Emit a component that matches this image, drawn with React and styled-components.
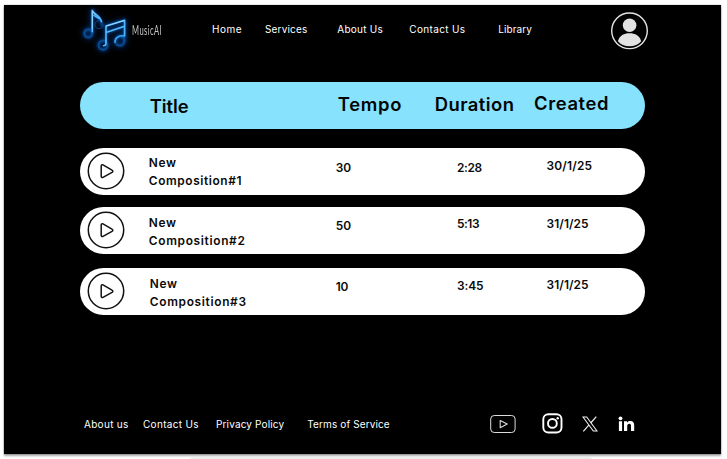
import React from "react";
import styled, { createGlobalStyle } from "styled-components";

const GlobalStyle = createGlobalStyle`
  * { box-sizing: border-box; }
  html, body { margin: 0; background: #fff; overflow: hidden; }
  body { font-family: "Inter", "Liberation Sans", sans-serif; }
`;

const Frame = styled.div`
  width: 727px;
  height: 459px;
  padding: 5px 6px 0 4px;
  display: flex;
  flex-direction: column;
  align-items: stretch;
`;

const Page = styled.div`
  height: 449px;
  flex: none;
  background: #000;
  display: flex;
  flex-direction: column;
  box-shadow: 0 1.5px 2px rgba(0, 0, 0, 0.35), 0 0 1px #777;
`;

const BottomTab = styled.div`
  width: 406px;
  height: 6px;
  margin: 3.2px 0 0 184px;
  flex: none;
  border-radius: 6px 6px 0 0;
  background: #ececec;
`;

const Header = styled.header`
  height: 77.4px;
  flex: none;
  display: flex;
  align-items: flex-start;
  padding-left: 76px;
`;

const Brand = styled.div`
  width: 132px;
  display: flex;
  align-items: flex-start;
`;

const BrandName = styled.span`
  width: 30px;
  margin: 18.4px 0 0 1.5px;
  font: 400 12.4px/16px "Lato", sans-serif;
  color: #c6c6c6;
  white-space: nowrap;
  letter-spacing: 0.7px;
  transform: scaleX(0.61);
  transform-origin: left center;
`;

const Nav = styled.nav`
  width: 399px;
  display: flex;
  padding-top: 17px;
`;

const NavLink = styled.a`
  flex: none;
  width: ${(p) => p.$width}px;
  font-size: 10px;
  line-height: 14px;
  color: #fff;
  white-space: nowrap;
  letter-spacing: ${(p) => p.$track}px;
`;

const Avatar = styled.svg`
  width: 38px;
  height: 38px;
  margin-top: 7px;
  flex: none;
`;

const Table = styled.main`
  width: 565px;
  margin-left: 75.8px;
  flex: none;
`;

const Bar = styled.div`
  height: 46.9px;
  margin-bottom: ${(p) => p.$gap}px;
  border-radius: 23.5px;
  background: ${(p) => (p.$head ? "#87e2fd" : "#fff")};
  display: grid;
  align-items: start;
  grid-template-columns: ${(p) =>
    p.$head ? "70px 188px 97px 99.3px 1fr" : "69px 187px 121.2px 89.5px 1fr"};
`;

const HeadCell = styled.span`
  margin-top: ${(p) => p.$top}px;
  font-size: 18.4px;
  font-weight: 600;
  line-height: 24px;
  letter-spacing: ${(p) => p.$track}px;
  color: #050505;
  white-space: nowrap;
`;

const Cell = styled.span`
  margin-top: ${(p) => p.$top}px;
  padding-left: ${(p) => p.$shift || 0}px;
  font-size: 11.9px;
  font-weight: 600;
  line-height: 18px;
  letter-spacing: ${(p) => p.$track || 0}px;
  color: #0a0a0a;
  white-space: nowrap;
`;

const PlayButton = styled.button`
  width: 38px;
  height: 38px;
  margin: 4px 0 0 7.2px;
  padding: 0;
  border: 0;
  background: none;
  svg { display: block; }
`;

const Footer = styled.footer`
  margin-top: auto;
  height: 48px;
  flex: none;
  display: flex;
  align-items: flex-start;
  padding-left: 80px;
`;

const FooterLinks = styled.nav`
  width: 405.5px;
  padding-top: 11.4px;
  display: flex;
`;

const Socials = styled.div`
  display: flex;
  align-items: center;
  height: 22px;
  margin-top: 6.7px;
`;

const SocialIcon = styled.svg`
  flex: none;
  margin-right: ${(p) => p.$gap || 0}px;
`;

const LogoArt = styled.svg`
  flex: none;
  margin-left: -6px;
`;

function Logo() {
  const notes = (
    <>
      <circle cx="18.3" cy="28.7" r="4" />
      <path d="M22.3 29V5.5L23 8c2 3.5 8.5 5.5 9 13" />
      <circle cx="33" cy="40.5" r="4.5" />
      <path d="M36 36V21.2l18.6-5.7V34.8M36 27.8l18.6-6.2" />
      <path d="M45 37.5c0-4.5 4-7 9.3-6.3" />
      <circle cx="49.8" cy="36.3" r="4.6" />
    </>
  );
  return (
    <LogoArt width="56" height="52" viewBox="0 0 56 52" overflow="visible" fill="none" strokeLinecap="round" strokeLinejoin="round">
      <defs>
        <filter id="wide" x="-40%" y="-40%" width="180%" height="180%">
          <feGaussianBlur stdDeviation="3" />
        </filter>
        <filter id="near" x="-30%" y="-30%" width="160%" height="160%">
          <feGaussianBlur stdDeviation="0.9" />
        </filter>
      </defs>
      <g transform="translate(-4 -0.3)">
        <g stroke="#0648a8" strokeWidth="3.5" opacity="0.65" filter="url(#wide)">{notes}</g>
        <g stroke="#0870d8" strokeWidth="2.2" opacity="0.65" filter="url(#near)">{notes}</g>
        <g stroke="#0f509c" strokeWidth="1.3">
          <circle cx="18.3" cy="28.7" r="4" />
          <circle cx="29" cy="20" r="4" opacity="0.6" />
          <circle cx="33" cy="40.5" r="4.5" />
          <circle cx="49.8" cy="36.3" r="4.6" />
        </g>
        <g stroke="#54b8ff" strokeWidth="1.6">
          <path d="M22.3 27V5.5c.8 3.500 8.200 5 9.200 11.500M24 10.500c2 2 4.500 2.500 6.500 4" />
          <path d="M36 36.5V21.2l18.600-5.700V31M36 27.800l18.600-6.200" />
          <path d="M45 37.500c0-4.500 4-7 9.300-6.300" stroke="#35a9f7" />
          <path d="M36 36.500v2c0 1.500-1 2.500-2.500 2.500" />
        </g>
        <path d="M22.300 24V6.500l3.500 4M36.500 21.300L54 16" stroke="#a8deff" strokeWidth="0.800" />
      </g>
    </LogoArt>
  );
}

function PlayIcon() {
  return (
    <svg width="38" height="38" viewBox="0 0 38 38" fill="none" stroke="#111" strokeLinejoin="round">
      <circle cx="19" cy="19" r="17.7" strokeWidth="1.5" />
      <path d="M14.2 14v10.2c0 1.2 .8 1.7 1.8 1.200l9-5c1.100-.7 1.100-1.700 0-2.300l-9-5.200c-1-.6-1.800-.1-1.800 1.100Z" strokeWidth="1.500" />
    </svg>
  );
}

const navLinks = [
  { label: "Home", width: 53, track: 0.55 },
  { label: "Services", width: 72.3, track: 0.18 },
  { label: "About Us", width: 72, track: 0.26 },
  { label: "Contact Us", width: 89, track: 0.35 },
  { label: "Library", width: 50, track: 0.08 },
];

const footerLinks = [
  { label: "About us", width: 59, track: 0.3 },
  { label: "Contact Us", width: 73, track: 0.32 },
  { label: "Privacy Policy", width: 91.3, track: 0.15 },
  { label: "Terms of Service", width: 100, track: 0.12 },
];

const columns = [
  { label: "Title", top: 12, track: -0.1 },
  { label: "Tempo", top: 10.1, track: 0.7 },
  { label: "Duration", top: 10.1, track: 0.45 },
  { label: "Created", top: 8.3, track: 0.6 },
];

const songs = [
  {
    id: 1, gap: 11.4, titleTop: 5.4, shift: 0, titleTrack: 0.6,
    tempo: { text: "30", top: 10.7, track: 0 },
    duration: { text: "2:28", top: 10.5, track: -0.4 },
    created: { text: "30/1/25", top: 8.8, track: 0.2 },
  },
  {
    id: 2, gap: 14.3, titleTop: 7, shift: 0, titleTrack: 0.68,
    tempo: { text: "50", top: 10.3, track: 0 },
    duration: { text: "5:13", top: 8.6, track: -0.45 },
    created: { text: "31/1/25", top: 8.6, track: 0.1 },
  },
  {
    id: 3, gap: 0, titleTop: 6.9, shift: 1, titleTrack: 0.68,
    tempo: { text: "10", top: 10.4, track: -0.4 },
    duration: { text: "3:45", top: 8.6, track: -0.1 },
    created: { text: "31/1/25", top: 7.9, track: 0.1 },
  },
];

export default function App() {
  return (
    <Frame>
      <GlobalStyle />
      <Page>
        <Header>
          <Brand>
            <Logo />
            <BrandName>MusicAI</BrandName>
          </Brand>
          <Nav>
            {navLinks.map((l) => (
              <NavLink key={l.label} $width={l.width} $track={l.track}>{l.label}</NavLink>
            ))}
          </Nav>
          <Avatar viewBox="0 0 38 38">
            <circle cx="18.5" cy="18.8" r="17.8" fill="none" stroke="#e2e2e2" strokeWidth="1.4" />
            <circle cx="18.6" cy="13.3" r="6.8" fill="#e2e2e2" />
            <path d="M6.9 29.2C8.5 23.5 13 21.3 18.5 21.3s10.2 2.2 11.7 7.9c-2.7 3.3-7 5-11.7 5s-8.9-1.7-11.6-5Z" fill="#e2e2e2" />
          </Avatar>
        </Header>

        <Table>
          <Bar $head $gap={19.2}>
            <span />
            {columns.map((c) => (
              <HeadCell key={c.label} $top={c.top} $track={c.track}>{c.label}</HeadCell>
            ))}
          </Bar>
          {songs.map((s) => (
            <Bar key={s.id} $gap={s.gap}>
              <PlayButton aria-label="Play"><PlayIcon /></PlayButton>
              <Cell $top={s.titleTop} $shift={s.shift} $track={s.titleTrack}>
                New<br />Composition#{s.id}
              </Cell>
              <Cell $top={s.tempo.top} $track={s.tempo.track}>{s.tempo.text}</Cell>
              <Cell $top={s.duration.top} $track={s.duration.track}>{s.duration.text}</Cell>
              <Cell $top={s.created.top} $track={s.created.track}>{s.created.text}</Cell>
            </Bar>
          ))}
        </Table>

        <Footer>
          <FooterLinks>
            {footerLinks.map((l) => (
              <NavLink key={l.label} $width={l.width} $track={l.track}>{l.label}</NavLink>
            ))}
          </FooterLinks>
          <Socials>
            <SocialIcon $gap={25.5} width="27" height="20" viewBox="0 0 27 20" fill="none" stroke="#ddd" strokeLinejoin="round">
              <rect x="0.7" y="1.5" width="24.4" height="17" rx="3.5" strokeWidth="1" />
              <path d="M10.2 6.5v7.2l7-3.6Z" strokeWidth="1.1" />
            </SocialIcon>
            <SocialIcon $gap={18.5} width="21" height="21" viewBox="0 0 21 21" fill="none" stroke="#fff">
              <rect x="1.3" y="1.3" width="18.2" height="18.2" rx="5" strokeWidth="1.9" />
              <circle cx="10.4" cy="10.4" r="4.4" strokeWidth="1.9" />
              <circle cx="15.7" cy="5.2" r="1.2" fill="#fff" stroke="none" />
            </SocialIcon>
            <SocialIcon $gap={20.5} width="16" height="16" viewBox="0 0 16 16" fill="none" stroke="#eee">
              <path d="M1 1h3.7L15 15h-3.7Z" strokeWidth="1.1" />
              <path d="M14.3 .6L8.7 7M7 8.9L1.3 15.4" strokeWidth="1.2" />
            </SocialIcon>
            <SocialIcon width="17" height="16" viewBox="0 0 17 16" fill="#fff">
              <circle cx="2.5" cy="2.3" r="1.9" />
              <path d="M.9 5.300h3.200v9.700H.9ZM6 5.300h3v1.400c.6-1 1.600-1.600 3.100-1.600 3.200 0 4.100 1.900 4.100 4.500V15H13v-4.800c0-1.300-.2-2.400-1.700-2.400S9.200 8.900 9.200 10.200V15H6Z" />
            </SocialIcon>
          </Socials>
        </Footer>
      </Page>
      <BottomTab />
    </Frame>
  );
}
